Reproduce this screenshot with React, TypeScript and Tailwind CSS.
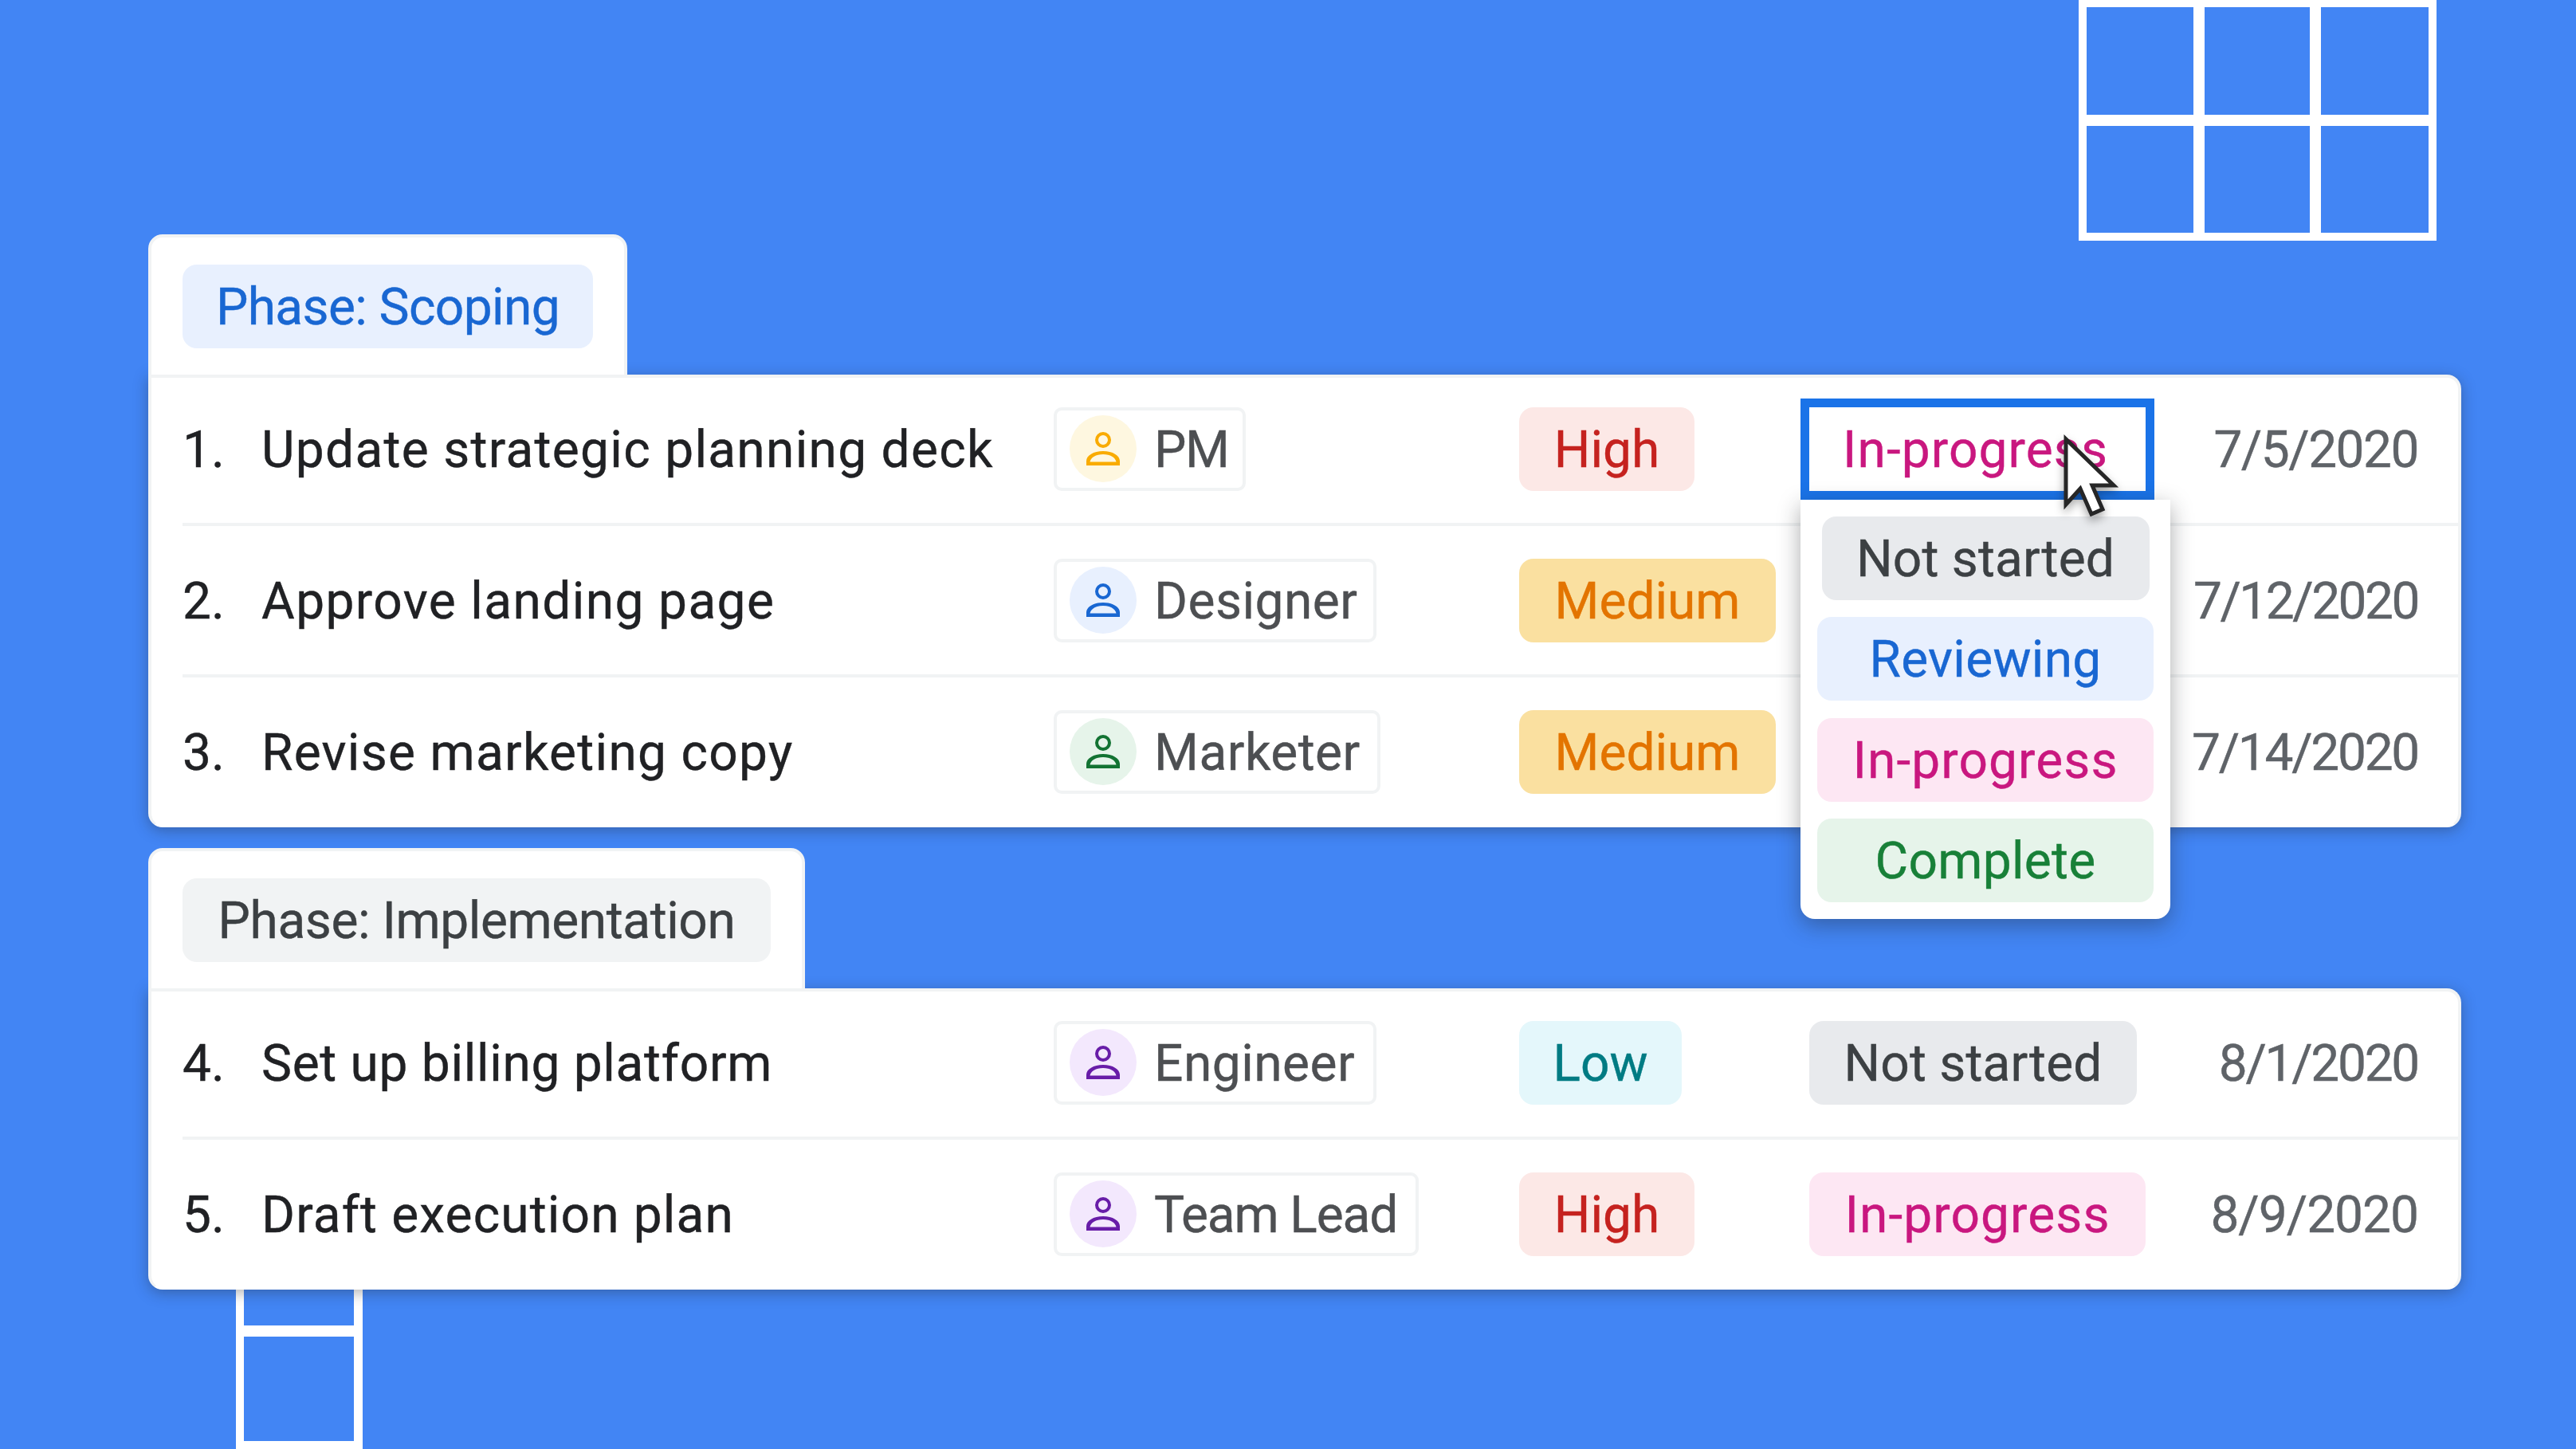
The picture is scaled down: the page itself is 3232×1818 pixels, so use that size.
function Person({ color }: { color: string }) {
  return (
    <svg width="42" height="42" viewBox="0 0 42 42" style={{ color }}>
      <circle cx="21" cy="10" r="8" fill="none" stroke="currentColor" strokeWidth="4" />
      <path
        d="M0 42V36.5C0 29.5 9 24 21 24C33 24 42 29.5 42 36.5V42H0ZM4.5 37.5H37.5C36.5 32 30 28 21 28C12 28 5.500 32 4.500 37.500Z"
        fill="currentColor"
        fillRule="evenodd"
      />
    </svg>
  );
}

function Cursor() {
  return (
    <svg width="80" height="110" viewBox="0 0 80 110" className="drop-shadow-[0_6px_6px_rgba(0,0,0,0.35)]">
      <path
        d="M7 6V88L25 68L39 100L53 94L40 64H67Z"
        fill="#ffffff"
        stroke="#262626"
        strokeWidth="5"
        strokeLinejoin="miter"
      />
    </svg>
  );
}

function Pill({ className, children }: { className: string; children: string }) {
  return (
    <div className={`flex h-[105px] items-center justify-center whitespace-nowrap rounded-[18px] pt-[3px] ${className}`}>
      {children}
    </div>
  );
}

const PRIORITY: Record<string, string> = {
  High: "w-[220px] bg-[#fce8e6] text-[#c5221f]",
  Medium: "w-[322px] bg-[#fae0a0] text-[#e37400]",
  Low: "w-[204px] bg-[#e4f7fb] text-[#007b83]",
};

type RowData = {
  n: string;
  t: string;
  tt: string;
  who: string;
  wt: string;
  c: string;
  a: string;
  p: string;
  d: string;
  dt: string;
  w: string;
  s?: string;
  open?: boolean;
};

const rows1: RowData[] = [
  { n: "1.", t: "Update strategic planning deck", tt: "tracking-[1.3px]", who: "PM", wt: "tracking-[-1.5px]", c: "#f9ab00", a: "#fef7e0", p: "High", d: "7/5/2020", dt: "tracking-[-1.5px]", w: "w-[241px]", open: true },
  { n: "2.", t: "Approve landing page", tt: "tracking-[1.4px]", who: "Designer", wt: "tracking-[0.5px]", c: "#1967d2", a: "#e8f0fe", p: "Medium", d: "7/12/2020", dt: "tracking-[-2.5px]", w: "w-[405px]" },
  { n: "3.", t: "Revise marketing copy", tt: "tracking-[1.3px]", who: "Marketer", wt: "tracking-[0.5px]", c: "#137333", a: "#e6f4ea", p: "Medium", d: "7/14/2020", dt: "tracking-[-2.3px]", w: "w-[410px]" },
];
const rows2: RowData[] = [
  { n: "4.", t: "Set up billing platform", tt: "tracking-[0.7px]", who: "Engineer", wt: "tracking-[0.5px]", c: "#681da8", a: "#f3e8fd", p: "Low", d: "8/1/2020", dt: "tracking-[-2.3px]", w: "w-[405px]", s: "Not started" },
  { n: "5.", t: "Draft execution plan", tt: "tracking-[1.15px]", who: "Team Lead", wt: "tracking-[-1.1px]", c: "#681da8", a: "#f3e8fd", p: "High", d: "8/9/2020", dt: "tracking-[-1px]", w: "w-[458px]", s: "In-progress" },
];

function Status({ s, open }: { s?: string; open?: boolean }) {
  if (open) {
    return (
      <div className="relative flex h-[105px] w-[422px] items-center pl-[42px] pt-[3px] tracking-[1.1px] text-[#c9177f]">
        In-progress
        <div className="absolute -inset-[11px] border-[11px] border-[#1a73e8]" />
        <div className="absolute left-[-11px] top-[116px] z-20 flex w-[464px] flex-col items-center gap-[21.5px] rounded-[18px] rounded-t-none bg-white pb-[21px] pt-[21px] shadow-[0_8px_28px_rgba(32,33,36,0.38)]">
          <Pill className="w-[411px] bg-[#e8eaed] tracking-[0.2px] text-[#3c4043]">Not started</Pill>
          <Pill className="w-[422px] bg-[#e8f0fe] tracking-[0.3px] text-[#1967d2]">Reviewing</Pill>
          <Pill className="w-[422px] bg-[#fde7f3] tracking-[1.1px] text-[#c9177f]">In-progress</Pill>
          <Pill className="w-[422px] bg-[#e6f4ea] tracking-[0.3px] text-[#188038]">Complete</Pill>
        </div>
        <div className="absolute left-[315px] top-[34px] z-30">
          <Cursor />
        </div>
      </div>
    );
  }
  if (s === "Not started") return <Pill className="w-[411px] bg-[#e8eaed] tracking-[0.2px] text-[#3c4043]">Not started</Pill>;
  return <Pill className="w-[422px] bg-[#fde7f3] tracking-[1.1px] text-[#c9177f]">{s ?? ""}</Pill>;
}

function Row({ r, last }: { r: RowData; last?: boolean }) {
  return (
    <div className={`ml-[39px] flex items-center pr-[50px] ${last ? "h-[186px]" : "h-[190px] border-b-[4px] border-[#f1f3f4]"}`}>
      <div className="w-[99px] shrink-0 pt-[3px] text-[#202124]">{r.n}</div>
      <div className={`w-[994px] shrink-0 whitespace-nowrap pt-[3px] text-[#202124] ${r.tt}`}>{r.t}</div>
      <div className="w-[584px] shrink-0">
        <div className={`flex h-[105px] items-center rounded-[10px] border-[4px] border-[#f1f3f4] pl-[16px] text-[#4d4f52] ${r.w}`}>
          <div className="flex h-[84px] w-[84px] shrink-0 items-center justify-center rounded-full" style={{ backgroundColor: r.a }}>
            <Person color={r.c} />
          </div>
          <span className={`ml-[22px] whitespace-nowrap pt-[3px] ${r.wt}`}>{r.who}</span>
        </div>
      </div>
      <div className="w-[364px] shrink-0">
        <Pill className={PRIORITY[r.p]}>{r.p}</Pill>
      </div>
      <Status s={r.s} open={r.open} />
      <div className={`ml-auto whitespace-nowrap pt-[3px] text-[#5f6368] ${r.dt}`}>{r.d}</div>
    </div>
  );
}

function Section({ label, tabW, pillCls, rows, z }: { label: string; tabW: string; pillCls: string; rows: RowData[]; z: string }) {
  return (
    <section className={`relative w-[2902px] ${z}`}>
      <div className={`relative z-10 -mb-[4px] h-[180px] rounded-t-[18px] border-[4px] border-[#f1f3f4] bg-white pl-[39px] pt-[34px] ${tabW}`}>
        <Pill className={`w-full max-w-[calc(100%-39px)] ${pillCls}`}>{label}</Pill>
      </div>
      <div className="relative rounded-[18px] rounded-tl-none border-[4px] border-b-[2px] border-[#f1f3f4] border-b-white bg-white shadow-[0_4px_18px_rgba(32,33,36,0.35)]">
        <div className="-mt-[4px]">
          {rows.map((r, i) => (
            <Row key={r.n} r={r} last={i === rows.length - 1} />
          ))}
        </div>
      </div>
    </section>
  );
}

export default function App() {
  const cell = "bg-[#4285f4]";
  return (
    <div className="relative h-[1818px] w-[3232px] overflow-hidden bg-[#4285f4] pl-[186px] pt-[294px] font-['Roboto',sans-serif] text-[64px] leading-none [-webkit-text-stroke:0.4px_currentColor]">
      <div className="absolute left-[2608px] top-[-1px] grid grid-cols-[134px_131.5px_135px] grid-rows-[134.5px_134.5px] gap-[14px] bg-white p-[10px]">
        <div className={cell} />
        <div className={cell} />
        <div className={cell} />
        <div className={cell} />
        <div className={cell} />
        <div className={cell} />
      </div>
      <div className="absolute left-[296px] top-[1519px] grid grid-cols-[138px] grid-rows-[134px_131px] gap-[14px] bg-white py-[10px] pl-[10px] pr-[11px]">
        <div className={cell} />
        <div className={cell} />
      </div>
      <div className="flex flex-col gap-[26px]">
        <Section label="Phase: Scoping" tabW="w-[601px]" pillCls="bg-[#e8f0fe] text-[#1967d2] tracking-[-0.6px]" rows={rows1} z="z-20" />
        <Section label="Phase: Implementation" tabW="w-[824px]" pillCls="bg-[#f1f3f4] text-[#3c4043] tracking-[-0.4px]" rows={rows2} z="z-10" />
      </div>
    </div>
  );
}
